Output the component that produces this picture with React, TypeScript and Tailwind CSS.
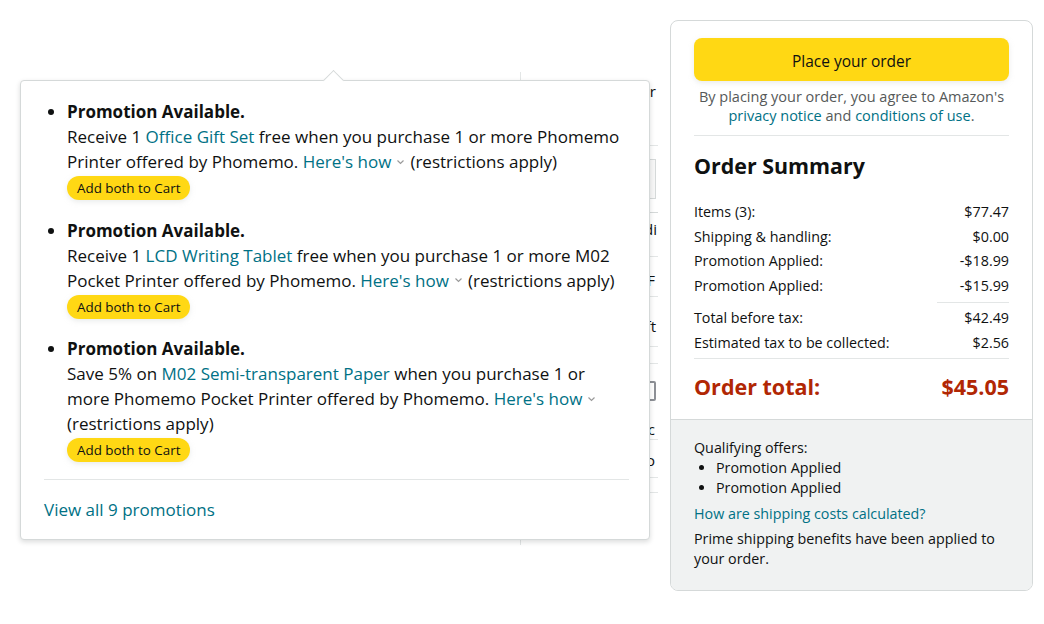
import { ReactNode } from 'react'

const font = "font-['Open_Sans','Liberation_Sans',sans-serif]"

function Chevron() {
  return (
    <svg width="9" height="6" viewBox="0 0 9 6" className="inline-block mx-[5px] mb-[3px]">
      <path d="M1.5 1.5l3 3 3-3" fill="none" stroke="#9a9a9a" strokeWidth="1.2" />
    </svg>
  )
}

function Link({ children }: { children: ReactNode }) {
  return <span className="text-[#007185]">{children}</span>
}

function AddButton() {
  return (
    <div className="flex mt-[2px]">
      <button
        type="button"
        className="h-[24px] px-[10px] rounded-full bg-[#ffd814] text-[13.4px] leading-[24px] text-[#0f1111] shadow-[0_2px_5px_rgba(213,217,217,0.5)]"
      >
        Add both to Cart
      </button>
    </div>
  )
}

function Promo({ children }: { children: ReactNode }) {
  return (
    <li>
      <div className="font-bold">Promotion Available.</div>
      <div>{children}</div>
      <AddButton />
    </li>
  )
}

function Row({ label, value }: { label: string; value: string }) {
  return (
    <div className="flex justify-between leading-[24.5px]">
      <span>{label}</span>
      <span>{value}</span>
    </div>
  )
}

// bits of the page that peek out to the right of the popover
function BackgroundColumn() {
  return (
    <div className="w-[138px] mt-[52px] h-[473px] border-l border-[#e3e6e6] flex flex-col text-[15px] leading-[20px] text-[#0f1111]">
      <div className="h-[38px] text-right pr-[2px] pt-[9px]">Order</div>
      <div className="h-[36px] border-b border-[#e3e6e6]" />
      <div className="h-[67px] border-b border-[#d5d9d9] pt-[13px]">
        <div className="h-[40px] bg-[#f7f7f7] border border-[#d5d9d9] mr-[2px]" />
      </div>
      <div className="h-[44px] text-right pr-[1px] pt-[6px] border-b border-[#e3e6e6]">Addi</div>
      <div className="h-[40px] text-right pr-[3px] pt-[13px] border-b border-[#e3e6e6]">F</div>
      <div className="h-[50px] text-right pr-[2px] pt-[19px] border-b border-[#e3e6e6]">Gift</div>
      <div className="h-[17px] border-b border-[#e3e6e6]" />
      <div className="h-[54px] flex justify-end items-center pr-[2px]">
        <div className="w-[10px] h-[20px] border-2 border-[#8d9096] rounded-[2px]" />
      </div>
      <div className="h-[22px] text-right pr-[3px] pt-[1px] border-b border-[#e3e6e6]">c</div>
      <div className="h-[38px] text-right pr-[3px] pt-[10px] border-b border-[#e3e6e6]">o</div>
      <div className="h-[15px] border-b border-[#e3e6e6]" />
    </div>
  )
}

export default function App() {
  return (
    <div className={`${font} relative w-[1044px] h-[624px] bg-white overflow-hidden flex pt-[20px] text-[#0f1111]`}>
      {/* left side of the page, mostly hidden under the popover */}
      <div className="w-[670px] flex">
        <div className="w-[520px]" />
        <BackgroundColumn />
      </div>

      {/* promotions popover */}
      <div className="absolute left-[20px] top-[80px] w-[630px] bg-white border border-[#d5d9d9] rounded-[4px] shadow-[0_2px_5px_rgba(15,17,17,0.15)] pt-[18px] pb-[17px] pl-[23px] pr-[20px] text-[17px] leading-[25px]">
        <div className="absolute -top-[8px] left-[305px] w-[15px] h-[15px] bg-white border-l border-t border-[#d5d9d9] rotate-45" />
        <ul className="list-disc pl-[23px] flex flex-col gap-[17.5px]">
          <Promo>
            Receive 1 <Link>Office Gift Set</Link> free when you purchase 1 or more Phomemo Printer offered by
            Phomemo. <Link>Here's how</Link>
            <Chevron />
            (restrictions apply)
          </Promo>
          <Promo>
            Receive 1 <Link>LCD Writing Tablet</Link> free when you purchase 1 or more M02 Pocket Printer offered
            by Phomemo. <Link>Here's how</Link>
            <Chevron />
            (restrictions apply)
          </Promo>
          <Promo>
            Save 5% on <Link>M02 Semi-transparent Paper</Link> when you purchase 1 or
            <br />
            more Phomemo Pocket Printer offered by Phomemo. <Link>Here's how</Link>
            <Chevron />
            <br />
            (restrictions apply)
          </Promo>
        </ul>
        <div className="mt-[17px] border-t border-[#e3e6e6]" />
        <div className="mt-[17px] text-[#007185]">View all 9 promotions</div>
      </div>

      {/* order summary card */}
      <div className="w-[363px] h-[571px] border border-[#d5d9d9] rounded-[8px] overflow-hidden flex flex-col text-[14.3px]">
        <div className="px-[23px] pt-[17px] pb-[18px]">
          <button
            type="button"
            className="w-full h-[43px] pt-[4px] rounded-[8px] bg-[#ffd814] text-[15.5px] text-[#0f1111] shadow-[0_2px_5px_rgba(213,217,217,0.5)]"
          >
            Place your order
          </button>
          <p className="mt-[6px] text-center text-[14.5px] leading-[19px] text-[#565959]">
            By placing your order, you agree to Amazon's
            <br />
            <Link>privacy notice</Link> and <Link>conditions of use</Link>.
          </p>
          <div className="mt-[10px] border-t border-[#e3e6e6]" />
          <h2 className="mt-[16px] text-[21.4px] font-bold leading-[28px]">Order Summary</h2>
          <div className="mt-[20px]">
            <Row label="Items (3):" value="$77.47" />
            <Row label="Shipping & handling:" value="$0.00" />
            <Row label="Promotion Applied:" value="-$18.99" />
            <Row label="Promotion Applied:" value="-$15.99" />
            <div className="flex justify-end my-[3.5px]">
              <div className="w-[72px] border-t border-[#e3e6e6]" />
            </div>
            <Row label="Total before tax:" value="$42.49" />
            <Row label="Estimated tax to be collected:" value="$2.56" />
          </div>
          <div className="mt-[3px] border-t border-[#e3e6e6]" />
          <div className="mt-[14px] flex justify-between text-[21.5px] font-bold leading-[28px] text-[#b12704]">
            <span>Order total:</span>
            <span>$45.05</span>
          </div>
        </div>
        <div className="flex-1 bg-[#f0f2f2] border-t border-[#d5d9d9] px-[23px] pt-[18px] leading-[20px]">
          <div>Qualifying offers:</div>
          <ul className="list-disc pl-[22px]">
            <li>Promotion Applied</li>
            <li>Promotion Applied</li>
          </ul>
          <div className="mt-[6px] text-[#007185]">How are shipping costs calculated?</div>
          <div className="mt-[5px]">Prime shipping benefits have been applied to your order.</div>
        </div>
      </div>
    </div>
  )
}
